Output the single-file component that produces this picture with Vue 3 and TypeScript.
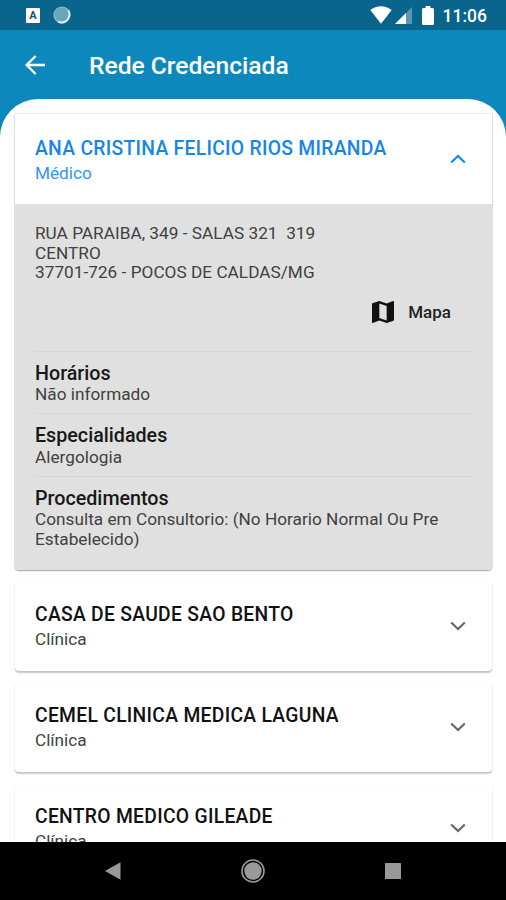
<script setup lang="ts">
interface Section {
  title: string
  text: string
}
interface Provider {
  name: string
  kind: string
  address?: string[]
  sections?: Section[]
}

const providers: Provider[] = [
  {
    name: 'ANA CRISTINA FELICIO RIOS MIRANDA',
    kind: 'Médico',
    address: ['RUA PARAIBA, 349 - SALAS 321  319', 'CENTRO', '37701-726 - POCOS DE CALDAS/MG'],
    sections: [
      { title: 'Horários', text: 'Não informado' },
      { title: 'Especialidades', text: 'Alergologia' },
      { title: 'Procedimentos', text: 'Consulta em Consultorio: (No Horario Normal Ou Pre Estabelecido)' },
    ],
  },
  { name: 'CASA DE SAUDE SAO BENTO', kind: 'Clínica' },
  { name: 'CEMEL CLINICA MEDICA LAGUNA', kind: 'Clínica' },
  { name: 'CENTRO MEDICO GILEADE', kind: 'Clínica' },
]
</script>

<template>
  <div class="screen">
    <div class="status">
      <div class="notifications">
        <span class="app-badge">A</span>
        <svg width="18" height="18" viewBox="0 0 18 18">
          <circle cx="9" cy="9" r="8.6" fill="#8fbccd" />
          <path d="M15.2 4.5A8 8 0 0 1 5.2 15.8" fill="none" stroke="#e4f3f8" stroke-width="2" />
          <circle cx="8.5" cy="8.5" r="7" fill="#69a5bb" />
        </svg>
      </div>
      <div class="system">
        <svg class="wifi" width="22" height="18" viewBox="0 0 22 18">
          <path d="M0.3 4.1C6.5-1 15.5-1 21.7 4.1L11 17.7Z" fill="#fff" />
        </svg>
        <svg class="signal" width="18" height="17" viewBox="0 0 18 17">
          <path d="M17 0V17H0Z" fill="#5c98b0" />
          <path d="M11 6V17H0Z" fill="#fff" />
        </svg>
        <svg class="battery" width="12" height="19" viewBox="0 0 12 19">
          <path d="M3.6 0H8.4V2H10.5Q12 2 12 3.5V17.5Q12 19 10.5 19H1.5Q0 19 0 17.5V3.5Q0 2 1.5 2H3.6Z" fill="#fff" />
        </svg>
        <span class="clock">11:06</span>
      </div>
    </div>

    <header class="appbar">
      <svg class="back" width="20" height="20" viewBox="0 0 20 20">
        <path d="M20 10H1.8M10.6 1L1.6 10L10.6 19" fill="none" stroke="#fff" stroke-width="2.3" />
      </svg>
      <h1>Rede Credenciada</h1>
    </header>

    <main class="sheet">
      <article v-for="p in providers" :key="p.name" class="card" :class="{ open: p.sections }">
        <div class="head">
          <div class="label">
            <h2>{{ p.name }}</h2>
            <p>{{ p.kind }}</p>
          </div>
          <svg class="chevron" width="16" height="10" viewBox="0 0 16 10">
            <path :d="p.sections ? 'M1.2 8.6L8 1.9L14.8 8.6' : 'M1.2 1.4L8 8.1L14.8 1.4'" fill="none" stroke="currentColor" stroke-width="2.1" />
          </svg>
        </div>
        <div v-if="p.sections" class="details">
          <div class="address">
            <p v-for="line in p.address" :key="line">{{ line }}</p>
          </div>
          <div class="map">
            <svg width="22" height="22" viewBox="3 3 18 18">
              <path fill="#111" d="M20.5 3l-.16.03L15 5.1 9 3 3.36 4.9c-.21.07-.36.25-.36.48V20.5c0 .28.22.5.5.5l.16-.03L9 18.9l6 2.1 5.64-1.9c.21-.07.36-.25.36-.48V3.5c0-.28-.22-.5-.5-.5zM15 19l-6-2.11V5l6 2.11V19z" />
            </svg>
            <span>Mapa</span>
          </div>
          <section v-for="s in p.sections" :key="s.title">
            <h3>{{ s.title }}</h3>
            <p>{{ s.text }}</p>
          </section>
        </div>
      </article>
    </main>

    <nav class="navbar">
      <svg width="16" height="18" viewBox="0 0 16 18"><path d="M0 9L15.5 0.3V17.7Z" fill="#999" /></svg>
      <svg width="24" height="24" viewBox="0 0 24 24">
        <circle cx="12" cy="12" r="11" fill="none" stroke="#999" stroke-width="1.6" />
        <circle cx="12" cy="12" r="8.7" fill="#999" />
      </svg>
      <svg width="16" height="16" viewBox="0 0 16 16"><rect width="16" height="16" rx="0.6" fill="#999" /></svg>
    </nav>
  </div>
</template>

<style>
body {
  margin: 0;
}
</style>

<style scoped>
.screen {
  width: 506px;
  height: 900px;
  overflow: hidden;
  display: flex;
  flex-direction: column;
  background: linear-gradient(#0d88bc 150px, #fff 150px);
  font-family: Roboto, sans-serif;
  color: #414141;
}
h1, h2, h3, p {
  margin: 0;
}
svg {
  display: block;
  flex: none;
}
.status {
  flex: none;
  height: 30px;
  box-sizing: border-box;
  padding: 0 19px 0 26px;
  background: #09658b;
  display: flex;
  justify-content: space-between;
  align-items: center;
}
.notifications, .system {
  display: flex;
  align-items: center;
}
.notifications {
  gap: 13px;
}
.app-badge {
  width: 14px;
  height: 15px;
  background: #fff;
  border-radius: 1px;
  color: #17546e;
  font-size: 11px;
  line-height: 15px;
  font-weight: 700;
  text-align: center;
}
.signal {
  margin-left: 3px;
}
.battery {
  margin-left: 9px;
  margin-right: 1px;
}
.clock {
  margin-left: 8px;
  color: #fff;
  font-size: 17.5px;
  line-height: 30px;
  font-weight: 500;
  padding-top: 2px;
}
.appbar {
  flex: none;
  height: 69px;
  padding-left: 25px;
  display: flex;
  align-items: center;
  gap: 44px;
}
h1 {
  color: #fff;
  font-size: 24.6px;
  line-height: 30px;
  font-weight: 500;
  padding-top: 2px;
}
.back {
  width: 20px;
}
.sheet {
  flex: 1;
  min-height: 0;
  overflow: hidden;
  background: #fff;
  border-radius: 38px 38px 0 0;
  padding: 15px 14px 0 15px;
  display: flex;
  flex-direction: column;
  gap: 13px;
}
.card {
  flex: none;
  border-radius: 0 0 4px 4px;
  box-shadow: 0 1.5px 1.5px rgba(0, 0, 0, 0.22), 0 0 1px rgba(0, 0, 0, 0.12);
}
.head {
  height: 88px;
  box-sizing: border-box;
  padding: 19px 26px 0 20px;
  display: flex;
  justify-content: space-between;
}
h2 {
  font-size: 19.3px;
  letter-spacing: 0.3px;
  line-height: 26px;
  font-weight: 500;
  color: #111;
  white-space: nowrap;
}
.label p {
  font-size: 17.2px;
  line-height: 22px;
}
.chevron {
  margin-top: 19px;
  color: #666;
}
.open {
  box-shadow: 0 1px 1.5px rgba(0, 0, 0, 0.3), 0 0 0 1px #ededed;
}
.open .head {
  height: 90px;
  padding-top: 22px;
}
.open .chevron {
  margin-top: 18px;
}
.open h2, .open .chevron {
  color: #1486ea;
}
.open .label p {
  color: #3494f2;
}
.details {
  height: 366px;
  box-sizing: border-box;
  background: #e0e0e0;
  border-radius: 0 0 4px 4px;
  padding: 20px 19px 0 20px;
}
.address, section p {
  font-size: 17.2px;
  line-height: 19.6px;
  white-space: pre-wrap;
}
.address {
  letter-spacing: 0.03px;
}
.map {
  height: 60px;
  margin-top: 8px;
  padding: 0 22px 17px 0;
  box-sizing: border-box;
  display: flex;
  justify-content: flex-end;
  align-items: center;
  gap: 14px;
  font-size: 17px;
  font-weight: 500;
  color: #222;
}
section {
  border-top: 1px solid #d6d6d6;
  height: 62.6px;
  box-sizing: border-box;
  padding-top: 10px;
}
h3 {
  font-size: 19.7px;
  line-height: 23.5px;
  font-weight: 500;
  color: #181818;
}
section p {
  letter-spacing: 0.02px;
}
.navbar {
  flex: none;
  height: 58px;
  box-sizing: border-box;
  background: #000;
  padding: 0 105px;
  display: flex;
  justify-content: space-between;
  align-items: center;
}
</style>
